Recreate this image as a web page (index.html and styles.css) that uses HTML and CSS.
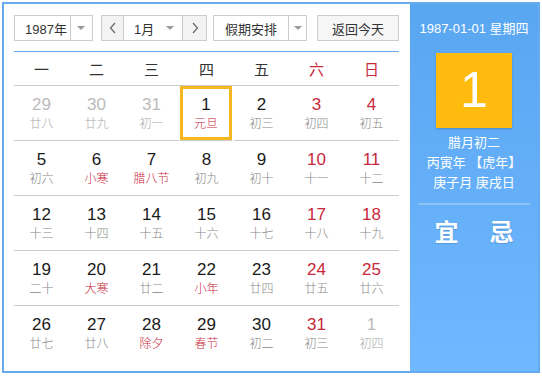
FILE: index.html
```html
<!DOCTYPE html>
<html lang="zh-CN">
<head>
  <meta charset="UTF-8"/>
  <title>万年历</title>
  <link rel="stylesheet" href="styles.css">
</head>
<body>

  <div class="calendar">
    <div class="main">
      <!-- Toolbar -->
      <div class="toolbar">
        <div class="select year">
          <span class="select-text">1987年</span>
          <span class="select-arrow"><i class="tri"></i></span>
        </div>
        <div class="month-group">
          <span class="nav-btn">
            <svg width="8" height="12" viewBox="0 0 8 12"><path d="M6 1 L1.5 6 L6 11" fill="none" stroke="#666" stroke-width="1.2"/></svg>
          </span>
          <span class="month"><span>1月</span><i class="tri"></i></span>
          <span class="nav-btn">
            <svg width="8" height="12" viewBox="0 0 8 12"><path d="M2 1 L6.5 6 L2 11" fill="none" stroke="#666" stroke-width="1.2"/></svg>
          </span>
        </div>
        <div class="select holiday">
          <span class="select-text">假期安排</span>
          <span class="select-arrow"><i class="tri"></i></span>
        </div>
        <div class="today-btn">返回今天</div>
      </div>

      <div class="week">
        <span>一</span><span>二</span><span>三</span><span>四</span><span>五</span>
        <span class="red">六</span><span class="red">日</span>
      </div>

      <div class="days" id="days">
        <!-- days injected by JS -->
      </div>
    </div>

    <div class="side">
      <div class="side-date">1987-01-01 星期四</div>
      <div class="big-day">1</div>
      <div class="lunar-info">
        <p>腊月初二</p>
        <p>丙寅年 【虎年】</p>
        <p>庚子月 庚戌日</p>
      </div>
      <div class="yiji">
        <span>宜</span><span>忌</span>
      </div>
    </div>
  </div>

  <script>
    // [day, lunar, flags] flags: o = other month, f = festival, t = today
    const days = [
      [29, "廿八", "o"], [30, "廿九", "o"], [31, "初一", "o"], [1, "元旦", "ft"], [2, "初三", ""], [3, "初四", ""], [4, "初五", ""],
      [5, "初六", ""], [6, "小寒", "f"], [7, "腊八节", "f"], [8, "初九", ""], [9, "初十", ""], [10, "十一", ""], [11, "十二", ""],
      [12, "十三", ""], [13, "十四", ""], [14, "十五", ""], [15, "十六", ""], [16, "十七", ""], [17, "十八", ""], [18, "十九", ""],
      [19, "二十", ""], [20, "大寒", "f"], [21, "廿二", ""], [22, "小年", "f"], [23, "廿四", ""], [24, "廿五", ""], [25, "廿六", ""],
      [26, "廿七", ""], [27, "廿八", ""], [28, "除夕", "f"], [29, "春节", "f"], [30, "初二", ""], [31, "初三", ""], [1, "初四", "o"]
    ];

    const box = document.getElementById("days");
    days.forEach((d, i) => {
      const cell = document.createElement("div");
      let cls = "day";
      if (d[2].includes("o")) cls += " other";
      if (d[2].includes("f")) cls += " festival";
      if (d[2].includes("t")) cls += " today";
      if (i % 7 >= 5) cls += " weekend";
      if (i >= 28) cls += " last";
      cell.className = cls;
      cell.innerHTML = `<span class="num">${d[0]}</span><span class="lunar">${d[1]}</span>`;
      box.appendChild(cell);
    });
  </script>
</body>
</html>
```

FILE: styles.css
```css
body {
  margin: 0;
  font-family: "Liberation Sans", "Noto Sans CJK SC", sans-serif;
  background: #fff;
}

.calendar {
  display: flex;
  margin: 2px;
  width: 534px;
  height: 367px;
  border: 2px solid #66aaef;
}

.main {
  width: 385px;
  padding: 11px 11px 0 10px;
  background: #fff;
}

/* Toolbar */
.toolbar {
  display: flex;
  height: 26px;
  margin-bottom: 10px;
  font-size: 13px;
  color: #333;
  white-space: nowrap;
}

.select {
  display: flex;
  border: 1px solid #ccc;
  box-sizing: border-box;
  height: 26px;
  background: #fff;
}

.select-text {
  display: flex;
  align-items: center;
  padding-left: 10px;
}

.select-arrow {
  display: flex;
  align-items: center;
  justify-content: center;
  width: 22px;
  border-left: 1px solid #ccc;
}

.tri {
  display: inline-block;
  width: 0;
  height: 0;
  border-left: 4px solid transparent;
  border-right: 4px solid transparent;
  border-top: 4px solid #999;
}

.year {
  width: 79px;
}

.year .select-text {
  width: 46px;
}

.month-group {
  display: flex;
  margin-left: 8px;
  width: 106px;
  height: 26px;
  box-sizing: border-box;
  border: 1px solid #ccc;
}

.nav-btn {
  display: flex;
  align-items: center;
  justify-content: center;
  width: 21px;
  background: #f3f3f3;
}

.nav-btn:first-child {
  border-right: 1px solid #ccc;
}

.nav-btn:last-child {
  width: 23px;
  border-left: 1px solid #ccc;
}

.month {
  flex: 1;
  display: flex;
  align-items: center;
  justify-content: space-between;
  padding: 0 8px 0 10px;
  background: #fff;
}

.holiday {
  margin-left: 6px;
  width: 94px;
}

.holiday .select-text {
  width: 75px;
  padding-left: 11px;
  box-sizing: border-box;
}

.holiday .select-arrow {
  width: 17px;
}

.today-btn {
  display: flex;
  align-items: center;
  justify-content: center;
  margin-left: 10px;
  width: 82px;
  box-sizing: border-box;
  border: 1px solid #ccc;
  background: #f6f6f6;
  font-size: 13px;
}

/* Weekday header */
.week {
  display: grid;
  grid-template-columns: repeat(7, 55px);
  height: 33px;
  align-items: center;
  border-top: 1px solid #6aa8e6;
  border-bottom: 1px solid #ccc;
  font-size: 15px;
  color: #333;
  text-align: center;
}

.red {
  color: #c8283a;
}

/* Days */
.days {
  display: grid;
  grid-template-columns: repeat(7, 55px);
}

.day {
  display: flex;
  flex-direction: column;
  align-items: center;
  height: 54px;
  border-bottom: 1px solid #ccc;
}

.day.last {
  border-bottom: none;
}

.num {
  margin-top: 9px;
  font-size: 17px;
  line-height: 20px;
  color: #1a1a1a;
}

.lunar {
  font-size: 12px;
  line-height: 16px;
  margin-top: 1px;
  color: #888;
  font-weight: 300;
}

.weekend .num {
  color: #c8283a;
}

.festival .lunar {
  color: #c8283a;
}

.other .num,
.other.weekend .num {
  color: #bbb;
}

.other .lunar {
  color: #aaa;
}

.today {
  margin: 0 2px 0 1px;
  box-shadow: inset 0 0 0 3px #f4b720;
}

/* Right panel */
.side {
  width: 128px;
  background: linear-gradient(#59a6f1, #70b8ff);
  color: #fff;
  text-align: center;
}

.side-date {
  margin-top: 16px;
  font-size: 13px;
  line-height: 18px;
}

.big-day {
  width: 76px;
  height: 75px;
  margin: 15px auto 0;
  background: #ffbb0e;
  box-shadow: 0 1px 2px rgba(0,0,0,0.2);
  font-size: 50px;
  line-height: 75px;
}

.lunar-info {
  margin-top: 5px;
  font-size: 13px;
}

.lunar-info p {
  margin: 0;
  line-height: 20px;
}

.yiji {
  display: flex;
  justify-content: center;
  gap: 31px;
  margin: 10px 8px 0;
  padding-top: 13px;
  border-top: 2px solid #8cc4f6;
  font-size: 24px;
  font-weight: bold;
  line-height: 30px;
  text-shadow: 0 1px 1px rgba(0,0,0,0.15);
}
```
